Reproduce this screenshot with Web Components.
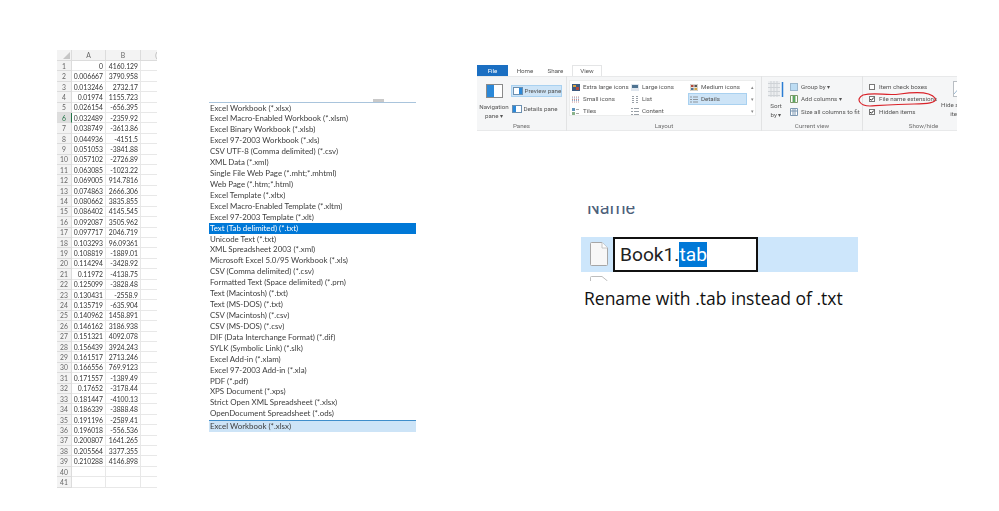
<!DOCTYPE html>
<html lang="en">
<head>
<meta charset="utf-8">
<title>Save as tab delimited</title>
<style>
  html, body { margin: 0; background: #fff; }
</style>
</head>
<body>
<slide-page>
  <data-sheet slot="sheet"></data-sheet>
  <save-list slot="list"></save-list>
  <view-ribbon slot="ribbon"></view-ribbon>
  <rename-row slot="rename"></rename-row>
</slide-page>

<script>
const SHEET_ROWS = [
  ['0','4160.129'],['0.006667','3790.958'],['0.013246','2732.17'],['0.01974','1155.723'],
  ['0.026154','-656.395'],['0.032489','-2359.92'],['0.038749','-3613.86'],['0.044936','-4151.5'],
  ['0.051053','-3841.88'],['0.057102','-2726.89'],['0.063085','-1023.22'],['0.069005','914.7816'],
  ['0.074863','2666.306'],['0.080662','3835.855'],['0.086402','4145.545'],['0.092087','3505.962'],
  ['0.097717','2046.719'],['0.103293','96.09361'],['0.108819','-1889.01'],['0.114294','-3428.92'],
  ['0.11972','-4138.75'],['0.125099','-3828.48'],['0.130431','-2558.9'],['0.135719','-635.904'],
  ['0.140962','1458.891'],['0.146162','3186.938'],['0.151321','4092.078'],['0.156439','3924.243'],
  ['0.161517','2713.246'],['0.166556','769.9123'],['0.171557','-1389.49'],['0.17652','-3178.44'],
  ['0.181447','-4100.13'],['0.186339','-3888.48'],['0.191196','-2589.41'],['0.196018','-556.536'],
  ['0.200807','1641.265'],['0.205564','3377.355'],['0.210288','4146.898'],['',''],['','']
];

const SAVE_TYPES = [
  'Excel Workbook (*.xlsx)','Excel Macro-Enabled Workbook (*.xlsm)','Excel Binary Workbook (*.xlsb)',
  'Excel 97-2003 Workbook (*.xls)','CSV UTF-8 (Comma delimited) (*.csv)','XML Data (*.xml)',
  'Single File Web Page (*.mht;*.mhtml)','Web Page (*.htm;*.html)','Excel Template (*.xltx)',
  'Excel Macro-Enabled Template (*.xltm)','Excel 97-2003 Template (*.xlt)','Text (Tab delimited) (*.txt)',
  'Unicode Text (*.txt)','XML Spreadsheet 2003 (*.xml)','Microsoft Excel 5.0/95 Workbook (*.xls)',
  'CSV (Comma delimited) (*.csv)','Formatted Text (Space delimited) (*.prn)','Text (Macintosh) (*.txt)',
  'Text (MS-DOS) (*.txt)','CSV (Macintosh) (*.csv)','CSV (MS-DOS) (*.csv)',
  'DIF (Data Interchange Format) (*.dif)','SYLK (Symbolic Link) (*.slk)','Excel Add-in (*.xlam)',
  'Excel 97-2003 Add-in (*.xla)','PDF (*.pdf)','XPS Document (*.xps)',
  'Strict Open XML Spreadsheet (*.xlsx)','OpenDocument Spreadsheet (*.ods)'
];

class SlidePage extends HTMLElement {
  connectedCallback() {
    this.attachShadow({ mode: 'open' });
    this.shadowRoot.innerHTML = `
      <style>
        :host { display: flex; width: 999px; height: 511px; overflow: hidden; background: #fff; padding-left: 57px; box-sizing: border-box; }
        .col-sheet { margin-top: 50px; width: 100px; }
        .col-list { margin: 101.5px 0 0 52px; width: 207px; }
        .col-right { margin: 65px 0 0 61px; width: 480px; display: flex; flex-direction: column; }
        .rename { margin: 75px 0 0 104px; }
      </style>
      <div class="col-sheet"><slot name="sheet"></slot></div>
      <div class="col-list"><slot name="list"></slot></div>
      <div class="col-right">
        <slot name="ribbon"></slot>
        <div class="rename"><slot name="rename"></slot></div>
      </div>
    `;
  }
}

class DataSheet extends HTMLElement {
  connectedCallback() {
    this.attachShadow({ mode: 'open' });
    const cells = SHEET_ROWS.map((r, i) => `
      <div class="rh ${i === 5 ? 'sel' : ''}">${i + 1}</div>
      <div class="c">${r[0]}</div><div class="c">${r[1]}</div><div class="c end"></div>`).join('');
    this.shadowRoot.innerHTML = `
      <style>
        :host { display: block; font: 6.8px Lato, "Liberation Sans", sans-serif; color: #333; filter: blur(.25px); }
        .grid { display: grid; grid-template-columns: 15px 34px 35px 16px; grid-template-rows: 11px; grid-auto-rows: 10.42px; }
        .ch, .rh { background: #f3f3f3; color: #666; display: flex; align-items: center; justify-content: center; border-right: 1px solid #dcdcdc; border-bottom: 1px solid #dcdcdc; box-sizing: border-box; }
        .rh.sel { background: #dedede; border-right: 1px solid #217346; color: #217346; }
        .corner { position: relative; }
        .corner svg { position: absolute; right: 1px; bottom: 1px; }
        .c { display: flex; align-items: center; justify-content: flex-end; padding-right: 2px; box-sizing: border-box; border-right: 1px solid #e8e8e8; border-bottom: 1px solid #e8e8e8; white-space: nowrap; }
        .end { border-right: 0; }
        .cut { justify-content: flex-end; padding-right: 0; color: #aaa; border-right: 0; }
      </style>
      <div class="grid">
        <div class="ch corner"><svg width="7" height="7"><path d="M7 0V7H0Z" fill="#c6c6c6"/></svg></div>
        <div class="ch">A</div><div class="ch">B</div><div class="ch cut">(</div>
        ${cells}
      </div>
    `;
  }
}

class SaveList extends HTMLElement {
  connectedCallback() {
    this.attachShadow({ mode: 'open' });
    const items = SAVE_TYPES.map(t =>
      `<div class="item ${t.startsWith('Text (Tab') ? 'sel' : ''}">${t}</div>`).join('');
    this.shadowRoot.innerHTML = `
      <style>
        :host { display: block; font: 7.9px Lato, "Liberation Sans", sans-serif; color: #3c3c3c; filter: blur(.2px); position: relative; }
        .grip { position: absolute; top: -3px; left: 164px; width: 11px; height: 3px; background: #c9c9c9; }
        .list { border-top: 1px solid #a9c4dc; }
        .item { height: 10.93px; line-height: 10.93px; padding-left: 1px; white-space: nowrap; }
        .sel { background: #0078d7; color: #fff; }
        .current { margin-top: .5px; border-top: 1px solid #3f8ecb; background: #cde4f7; height: 11.5px; line-height: 11.5px; padding-left: 1px; }
      </style>
      <div class="grip"></div>
      <div class="list">${items}</div>
      <div class="current">Excel Workbook (*.xlsx)</div>
    `;
  }
}

class RibbonGroup extends HTMLElement {
  connectedCallback() {
    this.attachShadow({ mode: 'open' });
    this.shadowRoot.innerHTML = `
      <style>
        :host { display: flex; flex-direction: column; box-sizing: border-box; border-right: 1px solid #e2e3e4; height: 55px; flex: none; }
        .body { flex: 1; display: flex; min-height: 0; }
        .name { height: 10px; line-height: 10px; text-align: center; color: #6d6d6d; }
      </style>
      <div class="body"><slot></slot></div>
      <div class="name">${this.getAttribute('label')}</div>
    `;
  }
}

class ViewRibbon extends HTMLElement {
  connectedCallback() {
    this.attachShadow({ mode: 'open' });
    this.shadowRoot.innerHTML = `
      <style>
        :host { display: block; width: 480px; font: 6.2px Roboto, "Open Sans", sans-serif; color: #555; filter: blur(.2px); position: relative; }
        .tabs { display: flex; height: 11px; align-items: stretch; }
        .tab { display: flex; align-items: center; justify-content: center; }
        .file { width: 31px; background: #1b6fc2; color: #fff; margin-right: 3px; }
        .home { width: 28px; }
        .share { width: 27px; margin-left: 3px; }
        .view { width: 30px; margin-left: 3px; background: #fff; border: 1px solid #e4e5e6; border-bottom: 0; box-sizing: border-box; }
        .bar { display: flex; height: 55px; overflow: hidden; background: #f5f6f7; box-shadow: inset 0 1px #e8e9ea, inset 0 -1px #e8e9ea; }
        .big { display: flex; flex-direction: column; align-items: center; line-height: 9px; text-align: center; flex: none; }
        .btn { display: flex; align-items: center; gap: 3px; height: 12px; padding-left: 2px; white-space: nowrap; box-sizing: border-box; }
        .btn svg { flex: none; }
        .hot { background: #cde4f7; border: 1px solid #a9d1f0; }
        .panes-col { display: flex; flex-direction: column; gap: 6px; margin: 8.5px 0 0 0; width: 51px; }
        .panes-col .btn { padding-left: 1px; gap: 1.5px; }
        .gallery { margin: 4px 0 0 2px; width: 187px; height: 36px; background: #fff; border: 1px solid #eceded; box-sizing: border-box; display: grid; grid-template-columns: 59px 59px 60px 1fr; grid-auto-rows: 12px; padding: 0 0 0 1px; }
        .gallery .btn { padding-left: 1px; }
        .gallery .hot { width: 59px; padding-left: 1px; margin-left: -1px; }
        .arrows { grid-column: 4; grid-row: 1 / span 3; display: flex; flex-direction: column; justify-content: space-around; align-items: center; color: #888; font-size: 5px; }
        .lines { display: flex; flex-direction: column; margin-top: 4.5px; flex: none; }
        .lines .btn { height: 12.5px; padding-left: 0; }
        .hide { margin: 5px 0 0 -1px; align-items: flex-start; width: 40px; }
        .ring { position: absolute; left: 379px; top: 25px; pointer-events: none; }
      </style>
      <div class="tabs">
        <div class="tab file">File</div><div class="tab home">Home</div><div class="tab share">Share</div><div class="tab view">View</div>
      </div>
      <div class="bar">
        <ribbon-group label="Panes" style="width:90px">
          <div class="big" style="width:34px;margin-top:8px">
            <svg width="17" height="14" viewBox="0 0 17 14"><rect x=".5" y=".5" width="16" height="13" fill="#fff" stroke="#8a8a8a"/><rect x="1" y="1" width="7" height="12" fill="#2b88d8"/></svg>
            <span style="margin-top:5px">Navigation<br>pane ▾</span>
          </div>
          <div class="panes-col">
            <div class="btn hot"><svg width="10" height="8" viewBox="0 0 10 8"><rect x=".5" y=".5" width="9" height="7" fill="#fff" stroke="#6b8fb0"/><rect x="6" y="1" width="3" height="6" fill="#2b88d8"/></svg>Preview pane</div>
            <div class="btn"><svg width="10" height="8" viewBox="0 0 10 8"><rect x=".5" y=".5" width="9" height="7" fill="#fff" stroke="#6b8fb0"/><rect x="1" y="1" width="3" height="6" fill="#2b88d8"/></svg>Details pane</div>
          </div>
        </ribbon-group>
        <ribbon-group label="Layout" style="width:195px">
          <div class="gallery">
            <div class="btn"><svg width="8" height="7" viewBox="0 0 8 7"><rect width="8" height="7" fill="#3d5a80"/><rect x="1" y="1" width="3" height="2" fill="#d9a441"/><rect x="4" y="3" width="3" height="3" fill="#b5483a"/></svg>Extra large icons</div>
            <div class="btn"><svg width="8" height="7" viewBox="0 0 8 7"><rect width="8" height="7" fill="#dfe6ee"/><rect x="1" y="1" width="6" height="3" fill="#4f7391"/></svg>Large icons</div>
            <div class="btn"><svg width="8" height="7" viewBox="0 0 8 7"><rect width="8" height="7" fill="#e6e2d8" stroke="#aaa" stroke-width=".5"/><rect x="1" y="1" width="2.5" height="2" fill="#b5483a"/><rect x="4.5" y="1" width="2.5" height="2" fill="#555"/><rect x="1" y="4" width="2.5" height="2" fill="#4f7391"/><rect x="4.5" y="4" width="2.5" height="2" fill="#d9a441"/></svg>Medium icons</div>
            <div class="arrows"><span>▴</span><span>▾</span><span>▾</span></div>
            <div class="btn"><svg width="8" height="7" viewBox="0 0 8 7"><path d="M0 1h8M0 3.5h8M0 6h8" stroke="#c98f8f" stroke-dasharray="1 1" fill="none"/><path d="M0 2h8M0 4.5h8" stroke="#8fa9c9" stroke-dasharray="1 1" fill="none"/></svg>Small icons</div>
            <div class="btn"><svg width="8" height="7" viewBox="0 0 8 7"><path d="M1 .5h2M1 2.5h2M1 4.5h2M1 6.5h2M5 .5h2M5 2.5h2M5 4.5h2M5 6.5h2" stroke="#9aa1a8" fill="none"/></svg>List</div>
            <div class="btn hot"><svg width="8" height="7" viewBox="0 0 8 7"><path d="M0 1h2M0 3.5h2M0 6h2M3 1h5M3 3.5h5M3 6h5" stroke="#8d949b" fill="none"/></svg>Details</div>
            <div class="btn"><svg width="8" height="7" viewBox="0 0 8 7"><rect width="3" height="3" fill="#5f93bd"/><rect y="4" width="3" height="3" fill="#8ab28a"/><path d="M4 1.5h3M4 5.5h3" stroke="#aaa" fill="none"/></svg>Tiles</div>
            <div class="btn" style="grid-column:2"><svg width="8" height="7" viewBox="0 0 8 7"><path d="M0 .5h2M0 3.5h2M0 6.5h2M3 .5h5M3 3.5h5M3 6.5h5" stroke="#9aa1a8" fill="none"/></svg>Content</div>
          </div>
        </ribbon-group>
        <ribbon-group label="Current view" style="width:101px">
          <div class="big" style="width:28px;margin-top:5px">
            <svg width="16" height="17" viewBox="0 0 16 17"><rect width="12" height="16" fill="#eceef0"/><path d="M0 2.5h12M0 6.5h12M0 10.5h12M0 14.5h12M3 0v16M6 0v16M9 0v16" stroke="#cfd3d7" fill="none"/><path d="M14.5 1v15" stroke="#2b7cd3" stroke-width="1.5"/></svg>
            <span style="margin-top:4px">Sort<br>by ▾</span>
          </div>
          <div class="lines">
            <div class="btn"><svg width="8" height="8"><rect x=".5" y=".5" width="7" height="7" fill="#bcdcf3" stroke="#9cb7cd"/></svg>Group by ▾</div>
            <div class="btn"><svg width="8" height="8"><path d="M.5 .5h7v7h-7zM3 .5v7M5 .5v7" fill="#fff" stroke="#7c9a6a"/><path d="M4 1v6" stroke="#2e9b3e" stroke-width="1.4"/></svg>Add columns ▾</div>
            <div class="btn"><svg width="8" height="8"><path d="M.5 .5h7v7h-7zM3 .5v7M5 .5v7M.5 3h7" fill="#fff" stroke="#7d98b3"/></svg>Size all columns to fit</div>
          </div>
        </ribbon-group>
        <ribbon-group label="Show/hide" style="width:122px">
          <div class="lines" style="margin-left:6px;width:73px">
            <div class="btn" style="gap:4px"><svg width="6" height="6"><rect x=".5" y=".5" width="5" height="5" fill="#fff" stroke="#777"/></svg>Item check boxes</div>
            <div class="btn" style="gap:4px"><svg width="6" height="6"><rect x=".5" y=".5" width="5" height="5" fill="#fff" stroke="#777"/><path d="M1.2 3l1.2 1.3L4.8 1.5" fill="none" stroke="#222"/></svg>File name extensions</div>
            <div class="btn" style="gap:4px"><svg width="6" height="6"><rect x=".5" y=".5" width="5" height="5" fill="#fff" stroke="#777"/><path d="M1.2 3l1.2 1.3L4.8 1.5" fill="none" stroke="#222"/></svg>Hidden items</div>
          </div>
          <div class="big hide">
            <svg width="14" height="16" viewBox="0 0 14 16" style="margin-left:12px"><rect x=".5" y=".5" width="13" height="15" fill="#fff" stroke="#b9bec3"/><path d="M1 13L8 5" stroke="#9db9d2"/></svg>
            <span style="margin-top:4px;white-space:nowrap;text-align:left">Hide s<br>&nbsp;&nbsp;&nbsp;&nbsp;&nbsp;&nbsp;ite</span>
          </div>
        </ribbon-group>
      </div>
      <svg class="ring" width="82" height="18" viewBox="0 0 82 18"><path d="M7 5C20 2 30 6 44 4 58 2 74 1 79 8 82 13 70 14 58 14 44 14 30 15 14 16 4 16 -1 9 7 5Z" fill="none" stroke="#d9232a" stroke-width="1.2"/></svg>
    `;
  }
}

class RenameRow extends HTMLElement {
  connectedCallback() {
    this.attachShadow({ mode: 'open' });
    this.shadowRoot.innerHTML = `
      <style>
        :host { display: block; width: 277px; font-family: Roboto, "Open Sans", sans-serif; }
        .head { height: 31px; overflow: hidden; position: relative; }
        .head span { position: absolute; left: 6px; top: -8px; font-size: 18px; line-height: 20px; color: #4c607a; }
        .row { display: flex; height: 35px; background: #cde6fb; box-sizing: border-box; }
        .row svg { margin: 5px 0 0 9px; flex: none; }
        .input { margin-left: 5px; width: 145px; height: 35px; box-sizing: border-box; border: 2px solid #111; background: #fff; font-size: 19.2px; padding-left: 5px; color: #222; display: flex; align-items: center; }
        .input b { font-weight: 400; background: #0078d7; color: #fff; line-height: 25px; height: 25px; }
        .next { height: 5px; margin: 4px 0 0 9px; overflow: hidden; }
        .caption { font-family: "Open Sans", sans-serif; font-size: 17.5px; line-height: 20px; margin: 7px 0 0 3px; color: #111; white-space: nowrap; }
      </style>
      <div class="head"><span>Name</span></div>
      <div class="row">
        <svg width="18" height="24" viewBox="0 0 18 24"><path d="M.5 1.5a1 1 0 0 1 1-1H12L17.5 6V22.5a1 1 0 0 1-1 1H1.5a1 1 0 0 1-1-1Z" fill="#f7f7f7" stroke="#a6a6a6"/><path d="M12 .5V6H17.5" fill="#fff" stroke="#c4c4c4"/></svg>
        <div class="input"><span>Book1.</span><b>tab</b></div>
      </div>
      <div class="next"><svg width="18" height="5" viewBox="0 0 18 5" style="display:block"><path d="M.5 5V1.5a1 1 0 0 1 1-1H12L17.5 5" fill="none" stroke="#bdbdbd"/></svg></div>
      <div class="caption">Rename with .tab instead of .txt</div>
    `;
  }
}

customElements.define('slide-page', SlidePage);
customElements.define('data-sheet', DataSheet);
customElements.define('save-list', SaveList);
customElements.define('ribbon-group', RibbonGroup);
customElements.define('view-ribbon', ViewRibbon);
customElements.define('rename-row', RenameRow);
</script>
</body>
</html>
